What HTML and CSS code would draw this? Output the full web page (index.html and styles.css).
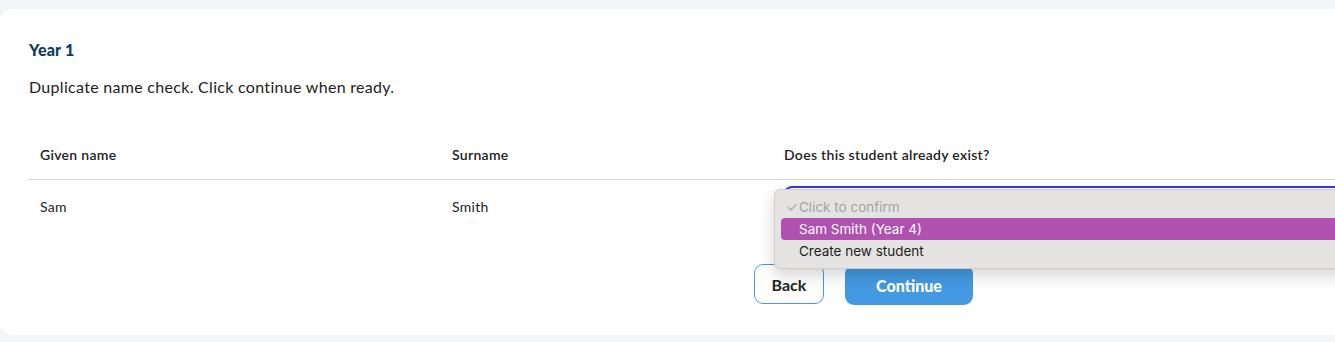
FILE: index.html
```html
<!DOCTYPE html>
<html lang="en">
<head>
    <meta charset="UTF-8">
    <meta name="viewport" content="width=device-width, initial-scale=1.0">
    <title>Duplicate name check</title>
    <link rel="stylesheet" href="styles.css">
</head>
<body>
    <div class="card">
        <h2 class="year">Year 1</h2>
        <p class="intro">Duplicate name check. Click continue when ready.</p>

        <div class="table">
            <div class="row head">
                <div class="cell">Given name</div>
                <div class="cell">Surname</div>
                <div class="cell">Does this student already exist?</div>
            </div>
            <div class="row body">
                <div class="cell">Sam</div>
                <div class="cell">Smith</div>
                <div class="cell select-cell">
                    <div class="select"></div>
                    <!-- open native menu -->
                    <div class="menu">
                        <div class="option disabled"><span class="tick">✓</span>Click to confirm</div>
                        <div class="option active">Sam Smith (Year 4)</div>
                        <div class="option">Create new student</div>
                    </div>
                </div>
            </div>
        </div>

        <div class="actions">
            <button class="btn btn-back">Back</button>
            <button class="btn btn-continue">Continue</button>
        </div>
    </div>
</body>
</html>
```

FILE: styles.css
```css
body {
    margin: 0;
    padding-top: 9px;
    height: 342px;
    box-sizing: border-box;
    overflow: hidden;
    background: #f3f5f8;
    font-family: Lato, "Noto Sans", sans-serif;
    color: #222;
}
.card {
    background: #fff;
    border-radius: 12px 0 0 12px;
    height: 326px;
    box-sizing: border-box;
    padding: 32px 0 0 29px;
}
.year {
    margin: 0;
    font-size: 16px;
    font-weight: 900;
    letter-spacing: 0.2px;
    color: #0f3a5d;
    line-height: 18px;
}
.intro {
    margin: 18px 0 0;
    font-size: 16px;
    letter-spacing: 0.3px;
    line-height: 20px;
}
.table {
    margin-top: 33px;
    margin-left: -1px;
}
.row {
    display: grid;
    grid-template-columns: 412px 332px 1fr;
    font-size: 14px;
    letter-spacing: 0.3px;
}
.row.head {
    height: 49px;
    border-bottom: 1px solid #d4d4d8;
    font-weight: 600;
    align-items: center;
}
.row.body {
    height: 52px;
    align-items: center;
}
.cell {
    padding-left: 12px;
}
.select-cell {
    position: relative;
    align-self: stretch;
}
.select {
    margin-top: 6px;
    height: 36px;
    border: 2px solid #3b37dc;
    border-right: none;
    border-radius: 8px 0 0 8px;
}
.menu {
    position: absolute;
    left: 2px;
    top: 9px;
    right: -20px;
    padding: 6px 0 6px 6px;
    background: #e4e3e2;
    border: 1px solid #cfcdcc;
    border-radius: 6px;
    box-shadow: 0 6px 16px rgba(0, 0, 0, 0.18);
    font-family: Inter, "Liberation Sans", sans-serif;
    font-size: 13.5px;
    letter-spacing: 0;
    z-index: 2;
}
.option {
    height: 22px;
    line-height: 22px;
    padding-left: 18px;
    color: #1f1f1f;
    border-radius: 4px;
}
.option.disabled {
    color: #a3a3a3;
    position: relative;
}
.tick {
    position: absolute;
    left: 5px;
}
.option.active {
    background: #b050b1;
    color: #fff;
}
.actions {
    display: flex;
    gap: 21px;
    margin-top: 32px;
    padding-left: 725px;
    align-items: flex-start;
}
.btn {
    font-family: Lato, "Noto Sans", sans-serif;
    font-size: 16px;
    border-radius: 9px;
    cursor: pointer;
}
.btn-back {
    width: 70px;
    height: 40px;
    background: #fff;
    border: 1px solid #4a9be3;
    color: #222;
    font-weight: 700;
}
.btn-continue {
    width: 128px;
    height: 40px;
    margin-top: 1px;
    background: #4399e2;
    border: none;
    color: #fff;
    font-weight: 900;
}
```
